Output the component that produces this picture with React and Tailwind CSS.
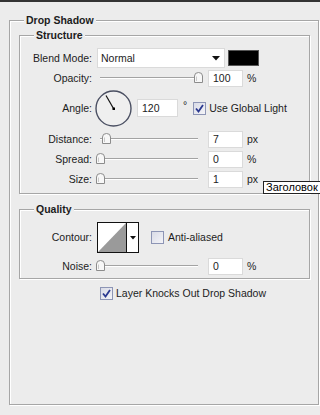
import { useState } from "react";

const etched = "border border-[#a6a6a6] shadow-[inset_1px_1px_0_#fff,1px_1px_0_#fff]";

function GroupBox({ title, className, bodyClass, children }) {
  return (
    <div className={`${etched} ${className}`}>
      <div className="-mt-[8px] -mb-[6px] h-[14px] flex">
        <div className="w-[14px] shrink-0" />
        <div className="px-[2px] bg-[#ececec] font-bold leading-[14px] whitespace-nowrap">{title}</div>
      </div>
      <div className={bodyClass}>{children}</div>
    </div>
  );
}

function Label({ children }) {
  return <span className="w-[72px] shrink-0 text-right">{children}</span>;
}

function Slider({ value }) {
  return (
    <div className="relative w-[106px] h-[12px] shrink-0">
      <div className="absolute left-[4px] right-[4px] top-[5px] h-[2px] border-t border-[#a3a3a3] border-b border-b-white" />
      <svg
        width="9"
        height="11"
        viewBox="0 0 9 11"
        className="absolute top-0"
        style={{ left: `${4 + value * 0.98 - 4.5}px` }}
      >
        <path d="M0.5 10.5 V4 Q0.5 0.5 4.5 0.5 Q8.5 0.5 8.5 4 V10.5 Z" fill="#f7f7f7" stroke="#8c8c8c" />
        <path d="M2.5 9 V4.5" stroke="#c9c9c9" />
      </svg>
    </div>
  );
}

function Field({ value, width = "w-[35px]", height = "h-[17px]" }) {
  return (
    <div className={`${width} ${height} shrink-0 bg-white border border-[#dadada] flex items-center pl-[4px]`}>
      {value}
    </div>
  );
}

function Checkbox({ checked }) {
  return (
    <div className="w-[13px] h-[13px] shrink-0 border border-[#8d95b5] bg-gradient-to-br from-[#d9dbe6] to-[#f4f4f8] flex items-center justify-center">
      {checked && (
        <svg width="9" height="9" viewBox="0 0 9 9">
          <path d="M1 4.5 L3.5 7.5 L8 1" fill="none" stroke="#2b3990" strokeWidth="1.8" />
        </svg>
      )}
    </div>
  );
}

function SliderRow({ label, value, unit }) {
  return (
    <div className="flex items-center h-[20px]">
      <Label>{label}</Label>
      <div className="ml-[4px]">
        <Slider value={value} />
      </div>
      <div className="ml-[6px]">
        <Field value={value} />
      </div>
      <span className="ml-[4px]">{unit}</span>
    </div>
  );
}

export default function App() {
  const [useGlobal] = useState(true);

  return (
    <div className="relative w-[320px] h-[415px] overflow-hidden bg-[#ececec] border-t-2 border-[#333] pt-[18px] pl-[9px] font-['Liberation_Sans',Arial,sans-serif] text-[10.5px] leading-[13px] text-[#1c1c1c]">
      <GroupBox title="Drop Shadow" className="w-[310px] h-[385px]" bodyClass="pl-[9px] pt-[14px]">
        <GroupBox title="Structure" className="w-[291px] h-[159px]" bodyClass="pt-[12px]">
          <div className="flex items-center h-[20px]">
            <Label>Blend Mode:</Label>
            <div className="ml-[5px] w-[128px] h-[20px] bg-white border border-[#dadada] flex items-center justify-between pl-[3px] pr-[4px]">
              <span>Normal</span>
              <svg width="8" height="5" viewBox="0 0 8 5">
                <path d="M0 0 H8 L4 4.5 Z" fill="#111" />
              </svg>
            </div>
            <div className="ml-[3px] w-[31px] h-[16px] bg-black border border-[#555]" />
          </div>
          <SliderRow label="Opacity:" value={100} unit="%" />
          <div className="flex items-center h-[40px]">
            <Label>Angle:</Label>
            <svg width="37" height="37" viewBox="0 0 37 37" className="ml-[3px] shrink-0">
              <circle cx="18.5" cy="18.5" r="17.5" fill="#efefef" stroke="#4a4f62" strokeWidth="1.4" />
              <line x1="18.5" y1="18.5" x2="11" y2="5.5" stroke="#111" strokeWidth="1.2" />
              <rect x="17.5" y="17.5" width="2.5" height="2.5" fill="#000" />
            </svg>
            <div className="ml-[5px]">
              <Field value={120} width="w-[41px]" height="h-[18px]" />
            </div>
            <span className="ml-[5px] self-start mt-[11px]">°</span>
            <div className="ml-[6px]">
              <Checkbox checked={useGlobal} />
            </div>
            <span className="ml-[3px]">Use Global Light</span>
          </div>
          <div className="mt-[1px]">
            <SliderRow label="Distance:" value={7} unit="px" />
            <SliderRow label="Spread:" value={0} unit="%" />
            <SliderRow label="Size:" value={1} unit="px" />
          </div>
        </GroupBox>

        <GroupBox title="Quality" className="mt-[15px] w-[291px] h-[70px]" bodyClass="pt-[12px]">
          <div className="flex items-center h-[31px]">
            <Label>Contour:</Label>
            <div className="ml-[5px] w-[42px] h-[31px] border border-[#111] bg-white flex">
              <svg width="28" height="29" viewBox="0 0 28 29" className="shrink-0">
                <path d="M0 29 L28 0 V29 Z" fill="#9a9a9a" />
              </svg>
              <div className="flex-1 border-l border-[#111] flex items-center justify-center">
                <svg width="6" height="4" viewBox="0 0 6 4">
                  <path d="M0 0 H6 L3 3.5 Z" fill="#111" />
                </svg>
              </div>
            </div>
            <div className="ml-[12px]">
              <Checkbox checked={false} />
            </div>
            <span className="ml-[4px]">Anti-aliased</span>
          </div>
          <div className="mt-[3px]">
            <SliderRow label="Noise:" value={0} unit="%" />
          </div>
        </GroupBox>

        <div className="mt-[7px] ml-[81px] flex items-center h-[14px]">
          <Checkbox checked />
          <span className="ml-[3px]">Layer Knocks Out Drop Shadow</span>
        </div>
      </GroupBox>

      <div className="absolute left-[263px] top-[179px] h-[13px] w-[70px] bg-white border border-[#222] pl-[2px] flex items-center text-black text-[11px]">
        Заголовок
      </div>
    </div>
  );
}
